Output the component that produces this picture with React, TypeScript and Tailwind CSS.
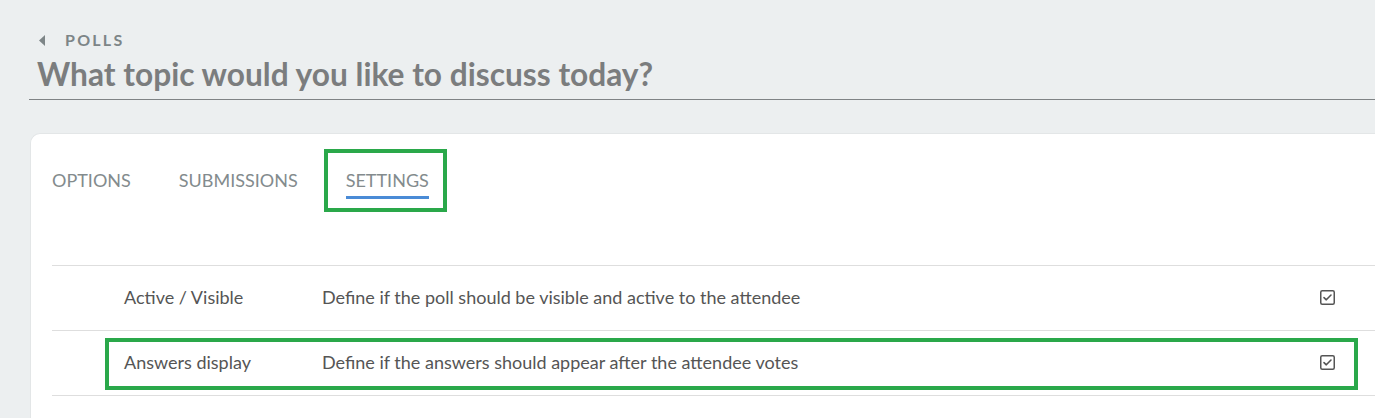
import { Fragment } from 'react';

const settings = [
  { name: 'Active / Visible', description: 'Define if the poll should be visible and active to the attendee', checked: true },
  { name: 'Answers display', description: 'Define if the answers should appear after the attendee votes', checked: true, highlight: true },
];

function CheckIcon() {
  return (
    <svg width="15" height="15" viewBox="0 0 15 15" fill="none">
      <rect x="0.75" y="0.75" width="13.5" height="13.5" rx="1.5" stroke="#555" strokeWidth="1.5" />
      <path d="M4 7.6 L6.3 9.8 L11 5" stroke="#555" strokeWidth="1.6" strokeLinecap="round" strokeLinejoin="round" />
    </svg>
  );
}

export default function App() {
  return (
    <div className="h-[418px] w-[1375px] overflow-hidden bg-[#eceff0] font-['Lato','Noto_Sans',sans-serif]">
      <div className="pl-[29px] pt-[30px]">
        <div className="ml-[10px] flex items-center gap-[20px] text-[#7d8587]">
          <svg width="6" height="11" viewBox="0 0 6 11">
            <path d="M6 0 L0 5.5 L6 11 Z" fill="#7d8587" />
          </svg>
          <span className="text-[16px] font-bold leading-[20px] tracking-[0.14em]">POLLS</span>
        </div>
        <h1 className="ml-[8px] mt-[4px] text-[31.7px] font-bold leading-[40px] text-[#7b7d7e]">
          What topic would you like to discuss today?
        </h1>
        <div className="mt-[5px] h-px bg-[#7f8385]" />
      </div>

      <div className="ml-[30px] mt-[33px] rounded-tl-[10px] border-l border-t border-[#e3e6e7] bg-white pb-10 pl-[21px]">
        <div className="relative flex h-[131px] gap-[48px] pt-[33px] text-[18px] text-[#838b8d]">
          <div className="h-[29px]">OPTIONS</div>
          <div className="h-[29px]">SUBMISSIONS</div>
          <div className="relative h-[29px]">
            SETTINGS
            <div className="mt-[2px] h-[3px] bg-[#4a8bd6]" />
            <div className="pointer-events-none absolute -left-[22px] -right-[18px] -top-[18px] h-[63px] border-[4px] border-[#2aa84a]" />
          </div>
        </div>

        <div className="border-t border-[#dedede] text-[18px] text-[#555]">
          {settings.map((s) => (
            <Fragment key={s.name}>
              <div className="relative flex h-[65px] items-center border-b border-[#dedede] pb-[1px]">
                <div className="w-[270px] pl-[72px]">{s.name}</div>
                <div className="flex-1">{s.description}</div>
                <div className="mr-[40px]">{s.checked && <CheckIcon />}</div>
                {s.highlight && (
                  <div className="pointer-events-none absolute left-[53px] top-[7px] h-[52px] w-[1253px] border-[4px] border-[#2aa84a]" />
                )}
              </div>
            </Fragment>
          ))}
        </div>
      </div>
    </div>
  );
}
